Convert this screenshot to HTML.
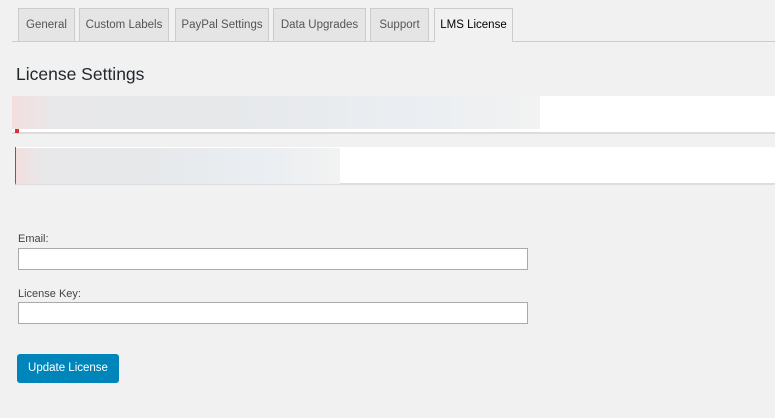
<!DOCTYPE html>
<html><head><style>
body{margin:0;width:775px;height:418px;background:#f1f1f1;font-family:"Liberation Sans",sans-serif;position:relative;overflow:hidden}
.t{position:absolute;top:8px;height:33px;border:1px solid #ccc;border-bottom:none;background:#e5e5e5;color:#555;font-size:11.5px;line-height:33px;text-align:center;box-sizing:border-box}
.t.a{background:#f1f1f1;color:#000;height:34px}
.line{position:absolute;left:12px;right:0;top:41px;height:1px;background:#ccc}
h1{position:absolute;left:16px;top:64px;margin:0;font-size:17.5px;font-weight:normal;color:#23282d}
.n{position:absolute;background:#fff}
.blur{position:absolute;background:linear-gradient(90deg,#f3dede 0,#e8e8ea 8%,#e6e8ea 40%,#eaeef2 75%,#f2f2f2 100%)}
label{position:absolute;left:18px;font-size:11px;color:#444}
.in{position:absolute;left:18px;width:510px;height:22px;box-sizing:border-box;background:#fff;border:1px solid #aaa}
.btn{position:absolute;left:17px;top:354px;width:102px;height:29px;background:#0085ba;border-radius:3px;color:#fff;font-size:11.5px;line-height:29px;text-align:center}
</style></head><body>
<div class="t" style="left:18px;width:57px">General</div>
<div class="t" style="left:79px;width:90px">Custom Labels</div>
<div class="t" style="left:175px;width:94px">PayPal Settings</div>
<div class="t" style="left:273px;width:93px">Data Upgrades</div>
<div class="t" style="left:370px;width:59px">Support</div>
<div class="line"></div>
<div class="t a" style="left:434px;width:79px">LMS License</div>
<h1>License Settings</h1>
<div class="n" style="left:12px;right:0;top:96px;height:36px;border-bottom:2px solid #ddd"></div>
<div class="blur" style="left:12px;top:96px;width:528px;height:33px"></div>
<div style="position:absolute;left:15px;top:129px;width:4px;height:4px;background:#dc3232"></div>
<div class="n" style="left:15px;right:0;top:147px;height:36px;border-bottom:2px solid #ddd;border-left:1px solid #dc3232"></div>
<div class="blur" style="left:16px;top:148px;width:324px;height:36px"></div>
<label style="top:233px">Email:</label>
<div class="in" style="top:248px"></div>
<label style="top:288px">License Key:</label>
<div class="in" style="top:302px"></div>
<div class="btn">Update License</div>
</body></html>
